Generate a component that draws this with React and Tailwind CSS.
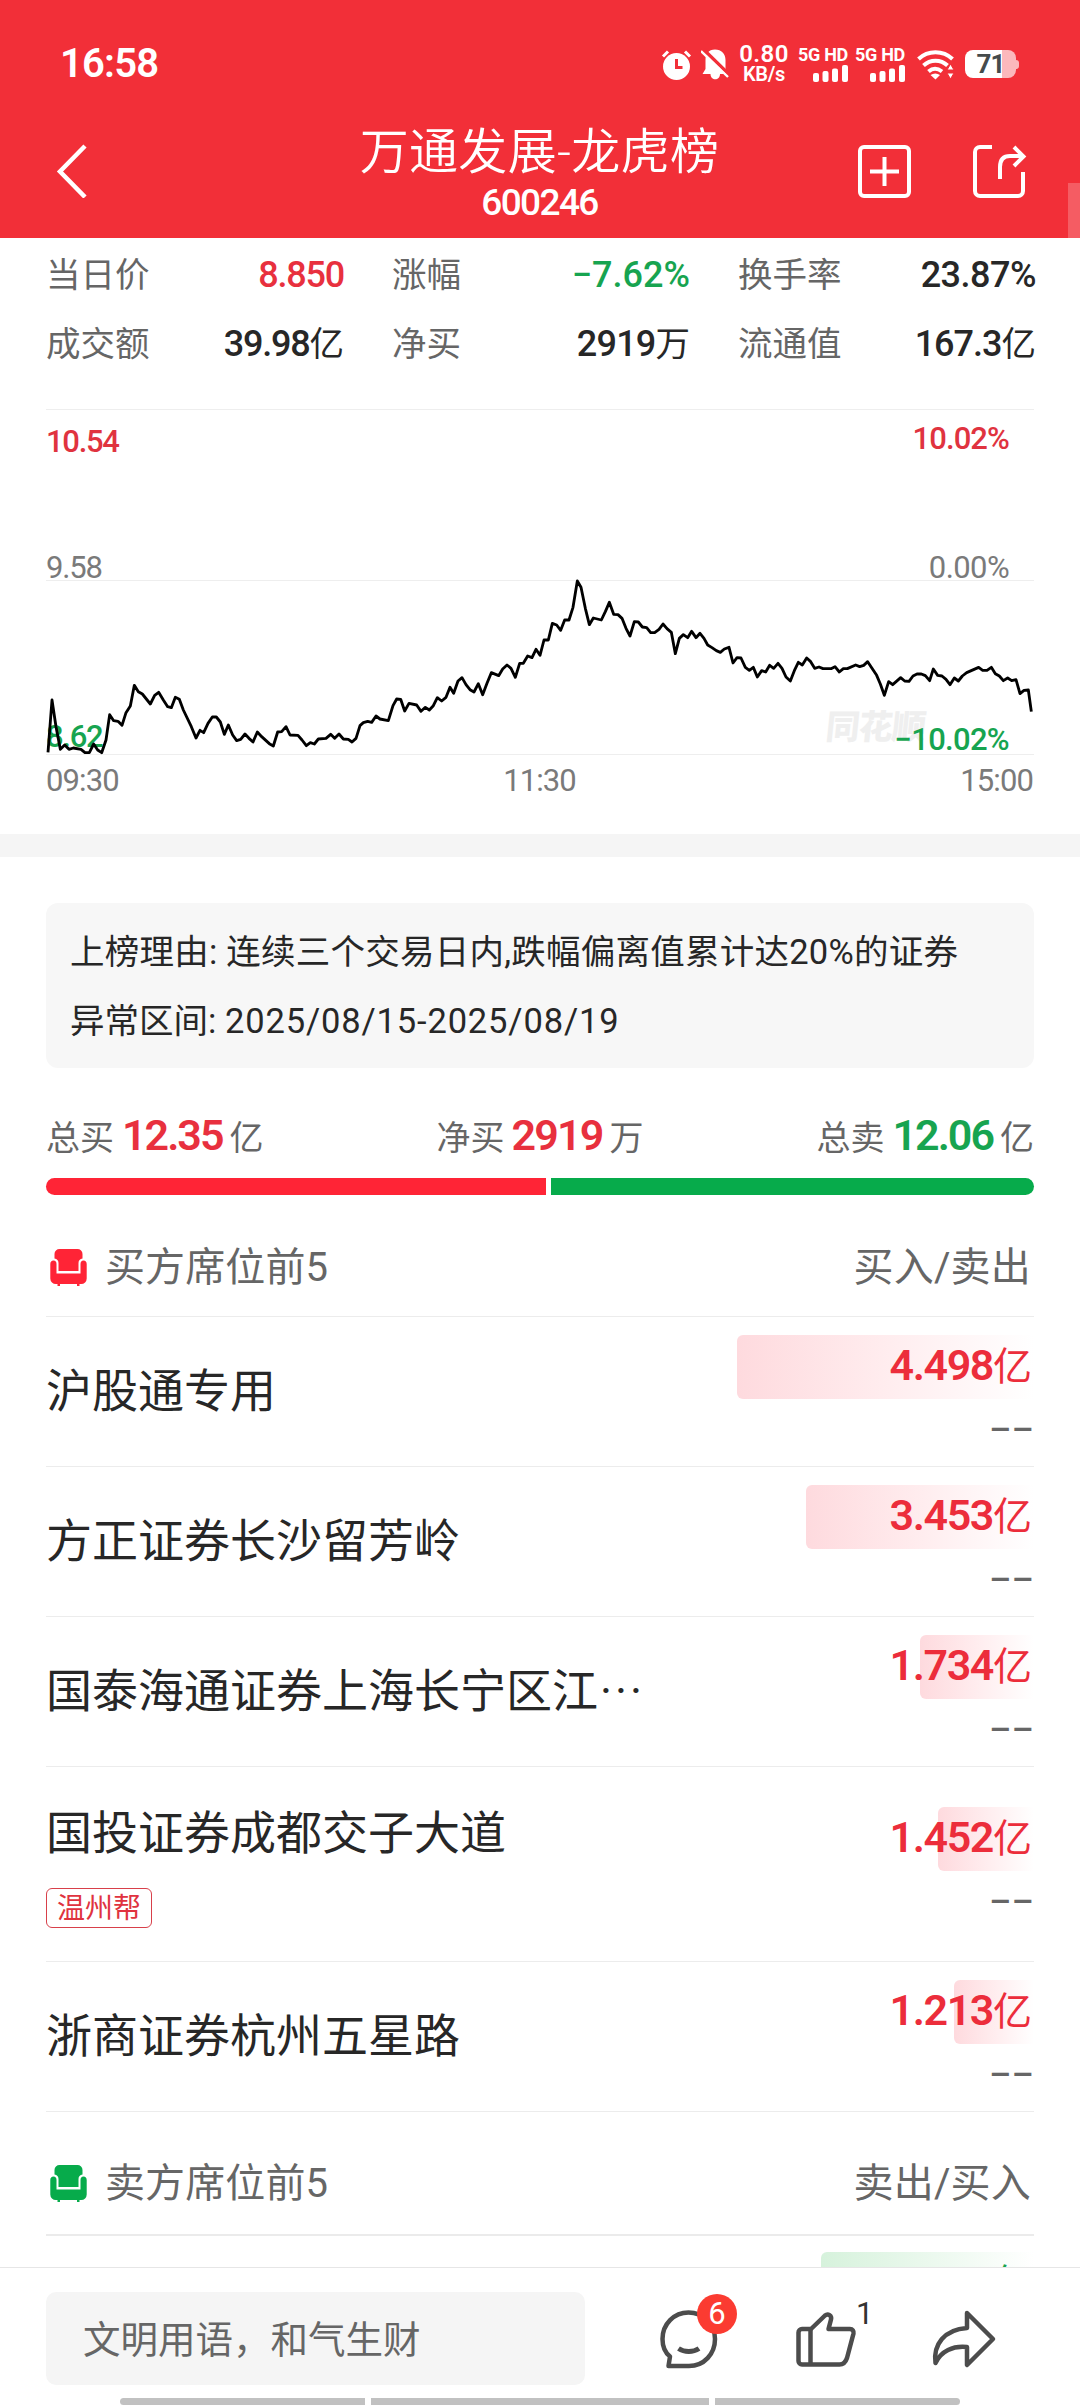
import React from 'react';

const stats = [
  { label: '当日价', value: '8.850', unit: '', style: 'tracking-[-1.200px] text-[#e8303e]' },
  { label: '涨幅', value: '−7.62%', unit: '', style: 'tracking-[0px] text-[#17a450]' },
  { label: '换手率', value: '23.87%', unit: '', style: 'tracking-[-0.500px] text-[#272727]' },
  { label: '成交额', value: '39.98', unit: '亿', style: 'tracking-[-1.200px] text-[#272727]' },
  { label: '净买', value: '2919', unit: '万', style: 'tracking-[-0.800px] text-[#272727]' },
  { label: '流通值', value: '167.3', unit: '亿', style: 'tracking-[-1px] text-[#272727]' },
];

const totals = [
  { label: '总买', value: '12.35', unit: '亿', style: 'tracking-[-2px] text-[#e8303e]' },
  { label: '净买', value: '2919', unit: '万', style: '-ml-px tracking-[-1.800px] text-[#e8303e]' },
  { label: '总卖', value: '12.06', unit: '亿', style: 'tracking-[-2px] text-[#17a450]' },
];

const buyers = [
  { name: '沪股通专用', amount: '4.498', bar: 297 },
  { name: '方正证券长沙留芳岭', amount: '3.453', bar: 228 },
  { name: '国泰海通证券上海长宁区江', truncated: true, amount: '1.734', bar: 114 },
  { name: '国投证券成都交子大道', amount: '1.452', bar: 96, tag: '温州帮' },
  { name: '浙商证券杭州五星路', amount: '1.213', bar: 80 },
];

// Minute line, three units per pixel
const pricePoints =
  '54,577 66,420 78,500 91,568 104,555 117,568 130,564 153,568 165,578 178,578 191,552 203,570 215,578 228,540 239,464 251,482 264,484 276,496 288,458 301,438 313,376 325,395 337,402 361,432 374,406 386,397 400,420 413,440 424,443 436,412 448,418 460,450 484,500 498,534 510,511 521,518 534,490 547,471 559,471 571,486 583,523 595,495 608,525 620,542 632,538 645,522 657,535 669,546 682,516 695,530 718,551 730,558 743,516 755,515 768,500 780,525 804,526 816,540 829,557 841,548 853,552 865,537 888,535 902,523 914,535 927,522 940,537 955,538 966,546 978,535 990,497 1000,488 1013,484 1025,487 1038,468 1050,477 1075,482 1089,437 1100,417 1112,418 1124,453 1137,430 1160,435 1173,454 1186,442 1198,450 1210,437 1222,413 1235,423 1248,412 1260,382 1271,400 1284,363 1296,353 1308,374 1320,389 1332,396 1345,371 1358,404 1371,370 1384,338 1406,347 1418,327 1431,315 1443,325 1456,352 1469,310 1480,310 1493,288 1506,293 1518,268 1530,286 1542,240 1555,240 1567,190 1580,195 1592,211 1604,180 1617,180 1629,142 1642,63 1653,82 1666,145 1678,194 1690,174 1714,180 1726,155 1738,127 1751,163 1764,164 1776,175 1788,205 1800,228 1813,185 1825,186 1837,201 1850,203 1862,218 1874,218 1887,208 1899,192 1911,206 1924,217 1936,281 1948,235 1960,224 1973,233 1985,214 1998,233 2010,220 2022,235 2033,255 2046,263 2059,272 2071,277 2083,267 2097,262 2109,309 2121,293 2133,294 2146,322 2158,331 2170,322 2182,351 2195,332 2207,336 2219,316 2231,325 2244,310 2256,325 2268,351 2281,363 2293,332 2305,307 2317,315 2330,294 2342,305 2354,325 2367,321 2379,326 2403,326 2415,320 2428,336 2440,326 2452,326 2477,315 2489,320 2501,316 2513,305 2526,325 2540,346 2551,372 2563,406 2576,365 2588,374 2612,353 2624,363 2637,364 2649,348 2661,342 2674,342 2686,347 2699,362 2710,327 2723,346 2736,348 2748,358 2760,374 2773,354 2785,363 2797,348 2810,338 2846,322 2858,331 2871,331 2884,322 2896,341 2908,348 2920,362 2933,354 2945,362 2958,359 2970,401 2982,391 2995,390 3004,455';

const Signal = () => (
  <div className="flex w-12 flex-col items-end gap-[3px]">
    <span className="text-[18px] leading-[15px] font-bold tracking-[-0.3px] whitespace-nowrap">5G HD</span>
    <svg width="35" height="17" viewBox="0 0 35 17" fill="currentColor">
      <rect x="0" y="8" width="6" height="9" rx="2" />
      <rect x="9.5" y="6" width="6" height="11" rx="2" />
      <rect x="19" y="3.5" width="6" height="13.5" rx="2" />
      <rect x="29" y="0" width="6" height="17" rx="2" />
    </svg>
  </div>
);

const StatusBar = () => (
  <div className="flex h-32 items-center pr-[61px] pl-[60px]">
    <span className="flex-1 text-[40px] leading-10 font-semibold tracking-[-0.8px]">16:58</span>

    <svg className="mr-[9px]" width="31" height="31" viewBox="0 0 31 31">
      <circle cx="15.5" cy="17.5" r="13.5" fill="#fff" />
      <path d="M2 7.5l5-5M29 7.5l-5-5" stroke="#fff" strokeWidth="3" />
      <path d="M15.5 10v8.5h6" stroke="#f22f38" strokeWidth="3" fill="none" />
    </svg>
    <svg className="mr-[10px]" width="28" height="32" viewBox="0 0 28 32">
      <path d="M14 1.5c6.500 0 10.500 4.500 10.500 10.500v9l2 5H1.500l3-5v-9C4.500 6 7.500 1.500 14 1.500z" fill="#fff" />
      <path d="M9.500 26h9.500c0 7-9.500 7-9.500 0z" fill="#fff" />
      <path d="M1 0l28 27.500" stroke="#f22f38" strokeWidth="3.500" />
      <path d="M0 3l27 26" stroke="#fff" strokeWidth="2.400" />
    </svg>

    <div className="mr-[11px] flex w-[50px] flex-col items-center">
      <span className="text-[24px] leading-5 font-semibold tracking-[0.4px]">0.80</span>
      <span className="text-[20px] leading-5 font-semibold tracking-[-0.300px]">KB/s</span>
    </div>
    <div className="mr-3 flex gap-[9px]">
      <Signal />
      <Signal />
    </div>

    <svg className="mr-[11px]" width="37" height="31" viewBox="0 0 37 31" fill="none" stroke="#fff" strokeWidth="4">
      <path d="M1.500 10c9.500-9 24.500-9 34 0" />
      <path d="M6.500 16.500c7-6.500 17-6.500 24 0" />
      <path d="M11.500 22.500c4-3.500 9-3.500 13.500 0" />
      <path d="M13.500 26c3-2 6.500-2 9.500 0l-4.500 4.500z" fill="#fff" stroke="none" />
      <path d="M33.500 15l3.500 6h-7zM33.500 30l3.500-6h-7z" fill="#fff" stroke="#f22f38" strokeWidth="1" />
    </svg>
    <div className="flex items-center">
      <div className="flex h-7 w-[51px] items-center justify-center rounded-lg bg-linear-to-r from-white from-72% to-[#fbb8bc] to-72%">
        <span className="text-[26px] leading-7 font-bold tracking-[-1px] text-[#454b4c]">71</span>
      </div>
      <div className="h-[9px] w-[3px] rounded-r bg-[#fbb8bc]" />
    </div>
  </div>
);

const NavBar = () => (
  <div className="flex h-[110px] items-start justify-between pr-[53px] pl-[56px]">
    <svg className="mt-4 mr-[112px]" width="54" height="54" viewBox="0 0 54 54" fill="none" stroke="#fff" strokeWidth="4.500">
      <path d="M29 2L4 27.500 29 53" />
    </svg>
    <div className="flex flex-col items-center">
      <h1 className="-mt-px text-[49px] leading-[52px] font-[350] tracking-[0.300px] whitespace-nowrap">万通发展-龙虎榜</h1>
      <span className="mt-px text-[37px] leading-[46px] font-medium tracking-[-1.600px]">600246</span>
    </div>
    <div className="mt-4 flex gap-[60px]">
      <svg width="55" height="55" viewBox="0 0 55 55" fill="none" stroke="#fff" strokeWidth="4">
        <rect x="3" y="3" width="49" height="49" rx="4" />
        <path d="M27.500 13v29M13 27.500h29" />
      </svg>
      <svg width="55" height="55" viewBox="0 0 55 55" fill="none" stroke="#fff" strokeWidth="4">
        <path d="M20 3H8a5 5 0 0 0-5 5v39a5 5 0 0 0 5 5h38a5 5 0 0 0 5-5V28" />
        <path d="M28 35V23c0-7 3-11 10-11h13" />
        <path d="M42 3l9.500 9.500-9.500 9.500" />
      </svg>
    </div>
  </div>
);

const Chart = () => (
  <div className="relative h-[346px] text-[31px] leading-[32px] font-medium tracking-[-0.8px]">
    <div className="absolute right-[109px] bottom-2.5 -skew-x-6 text-[34px] leading-[36px] font-black tracking-[-1px] text-[#efefef]">同花顺</div>
    <span className="absolute top-[17px] left-0 tracking-[-1.300px] text-[#e0333f]">10.54</span>
    <span className="absolute top-[14px] right-[25px] tracking-[-0.900px] text-[#e0333f]">10.02%</span>
    <span className="absolute top-[143px] left-0 font-normal tracking-[-1.200px] text-[#7a7a7a]">9.58</span>
    <span className="absolute top-[143px] right-[25px] font-normal tracking-[-0.600px] text-[#7a7a7a]">0.00%</span>
    <span className="absolute bottom-0.5 left-0 tracking-[-1.300px] text-[#17a450]">8.62</span>
    <span className="absolute right-[25px] -bottom-px tracking-[-0.700px] text-[#17a450]">−10.02%</span>
    <svg className="absolute inset-0" width="988" height="346" viewBox="48 -453 2964 1038" fill="none">
      <path d="M48-451.500h2964M48 61.500h2964M48 583.500h2964" stroke="#eeeeee" strokeWidth="3" />
      <polyline points={pricePoints} stroke="#000" strokeWidth="8.500" strokeLinejoin="round" />
    </svg>
  </div>
);

const Sofa = ({ className }) => (
  <svg className={className} width="37" height="38" viewBox="0 0 37 38" fill="currentColor">
    <path d="M9.500 1h18a5 5 0 0 1 5 5v4.500c-2.500.5-4 2-4 4.500v8h-20v-8c0-2.500-1.500-4-4-4.500V6a5 5 0 0 1 5-5z" />
    <path d="M3.500 12.500C5.500 12.500 6.500 14 6.500 16v9.500h24V16c0-2 1-3.500 3-3.500s3.200 1.500 3.200 3.500v14.500a5.500 5.500 0 0 1-5.500 5.500h-1.700v2h-2.500v-2h-17v2H7.500v-2H6A5.500 5.500 0 0 1 .3 30.500V16c0-2 1.200-3.500 3.200-3.500z" />
  </svg>
);

const SeatHeader = ({ title, columns, color }) => (
  <div className="flex h-full items-center text-[40px] leading-10 text-[#666]">
    <Sofa className={`-mt-0.5 mr-[18px] ml-[4px] ${color}`} />
    <span className="flex-1 tracking-[0.1px]">{title}</span>
    <span className="pr-[3px] tracking-[0.2px]">{columns}</span>
  </div>
);

const Amount = ({ value, width, side }) => {
  const isBuy = side === 'buy';
  return (
    <div className="flex w-[297px] flex-col items-end">
      <div className="relative flex h-16 w-full items-center justify-end pr-0.5">
        <div
          className={`absolute top-0 right-0 h-16 rounded-l-md bg-linear-to-r ${isBuy ? 'from-[#fedade] to-white' : 'from-[#d6f2dc] to-white'}`}
          style={{ width }}
        />
        <span className={`relative -mt-0.5 text-[43px] leading-[62px] font-semibold tracking-[-1.400px] ${isBuy ? 'text-[#ec2d3b]' : 'text-[#17a450]'}`}>
          {value}
          <span className="text-[39px] font-normal tracking-normal">亿</span>
        </span>
      </div>
      <div className="flex h-[50px] items-center pt-[10px]">
        <span className="text-[34px] leading-[38px] font-medium tracking-[0.500px] text-[#666]">––</span>
      </div>
    </div>
  );
};

const SeatRow = ({ name, truncated, tag, amount, bar }) => (
  <div className={`flex items-center justify-between border-b border-[#ececec] ${tag ? 'h-[195px]' : 'h-[150px]'}`}>
    <div className="flex flex-col items-start">
      <span className={`text-[46px] leading-[60px] whitespace-nowrap text-[#272727] ${tag ? 'mt-0.5' : '-mt-0.5'}`}>
        {name}
        {truncated && <span className="ml-[2px] tracking-[3px]">···</span>}
      </span>
      {tag && (
        <span className="mt-[25px] h-10 rounded-md border-[1.500px] border-[#d8404a] px-2.5 text-[28px] leading-[39px] text-[#e0333f]">
          {tag}
        </span>
      )}
    </div>
    <Amount value={amount} width={bar} side="buy" />
  </div>
);

const BottomBar = () => (
  <div className="h-[141px] shrink-0 border-t border-[#e6e6e6] bg-white">
    <div className="flex h-[130px] items-start pt-6 pl-[46px]">
      <div className="flex h-[93px] w-[539px] items-center rounded-[10px] bg-[#f5f5f5] pt-0.5 pl-[37px]">
        <span className="text-[37.500px] leading-[44px] text-[#666]">文明用语，和气生财</span>
      </div>
      <div className="relative mt-[17px] ml-[74px]">
        <svg width="60" height="60" viewBox="0 0 60 60" fill="none" stroke="#4c4c4c" strokeWidth="4.500" strokeLinejoin="round">
          <path d="M9.500 57l1.500-9.500C6 43.500 3.500 36.500 3.500 30 3.500 15 15 3.500 29.500 3.500S56 15 56 30 45 57 30 57z" />
          <path d="M19.500 39.500c6 4 14.500 4 20.500 0" strokeWidth="5" />
        </svg>
        <span className="absolute -top-[15px] left-[38px] flex h-10 w-10 items-center justify-center rounded-full bg-[#fb3b31] text-[31px] leading-10 text-white">6</span>
      </div>
      <div className="relative mt-[17px] ml-[76px]">
        <svg width="62" height="60" viewBox="0 0 62 60" fill="none" stroke="#4c4c4c" strokeWidth="4.500" strokeLinejoin="round">
          <path d="M16 20l14-13.500c3-2.500 7 0 6 4L33.500 20H55c2.500 0 4 2 3.500 4.500L52 49c-1.500 4.500-3.500 6.500-7.500 6.500H7A3.500 3.500 0 0 1 3.500 52V23.500A3.500 3.500 0 0 1 7 20z" />
          <path d="M15.500 20v35.500" />
        </svg>
        <span className="absolute -top-[11px] left-[61px] text-[31px] leading-8 text-[#333]">1</span>
      </div>
      <svg className="mt-[17px] ml-[74px]" width="66" height="60" viewBox="0 0 66 60" fill="none" stroke="#4c4c4c" strokeWidth="4.500" strokeLinejoin="round">
        <path d="M36 4l26 26-26 26V38C22 36.500 10 42 4.500 54 2 36 13 20.500 36 19z" />
      </svg>
    </div>
    <div className="flex h-[7px] justify-center gap-1.5">
      <div className="w-[245px] rounded-l-full bg-[#c1c1c1]" />
      <div className="w-[338px] bg-[#c1c1c1]" />
      <div className="w-[245px] rounded-r-full bg-[#c1c1c1]" />
    </div>
  </div>
);

const App = () => {
  return (
    <div className="flex h-[2408px] w-[1080px] flex-col overflow-hidden bg-white font-['Roboto','Noto_Sans_CJK_SC',sans-serif] text-[#272727]">
      <header className="relative h-[238px] shrink-0 bg-[#f22f38] text-white">
        <StatusBar />
        <NavBar />
        <div className="absolute right-0 bottom-0 h-[55px] w-3 bg-[#f55c63]" />
      </header>

      <main className="min-h-0 flex-1 overflow-hidden">
        <section className="h-[596px] px-[46px]">
          <div className="-mr-[2px] grid h-[171px] grid-cols-3 content-start gap-x-12 pt-0.5">
            {stats.map((item) => (
              <div key={item.label} className="flex h-[69px] items-center justify-between">
                <span className="text-[34.500px] leading-[40px] text-[#666]">{item.label}</span>
                <span className={`text-[36px] leading-[40px] font-medium ${item.style}`}>
                  {item.value}
                  <span className="text-[34.500px] font-normal tracking-normal">{item.unit}</span>
                </span>
              </div>
            ))}
          </div>
          <Chart />
          <div className="flex items-center justify-between pt-[10px] pr-px text-[31px] leading-[32px] tracking-[-0.900px] text-[#7a7a7a]">
            <span>09:30</span>
            <span>11:30</span>
            <span>15:00</span>
          </div>
        </section>

        <div className="h-[23px] bg-[#f5f5f5]" />

        <section className="px-[46px] pt-[46px]">
          <div className="h-[165px] rounded-xl bg-[#f7f7f7] px-6 pt-[15px] text-[34.500px] leading-[69px] whitespace-nowrap">
            <p className="tracking-[0.240px]">上榜理由: 连续三个交易日内,跌幅偏离值累计达20%的证券</p>
            <p>异常区间: <span className="tracking-[0.850px]">2025/08/15-2025/08/19</span></p>
          </div>

          <div className="flex h-[110px] items-center justify-between pt-[26px]">
            {totals.map((item) => (
              <div key={item.label} className="flex items-baseline gap-2 text-[34px] leading-[46px] text-[#666]">
                <span>{item.label}</span>
                <span className={`text-[43px] font-semibold ${item.style}`}>{item.value}</span>
                <span className="-ml-px">{item.unit}</span>
              </div>
            ))}
          </div>
          <div className="flex h-[17px] gap-[5px]">
            <div className="w-[500px] rounded-l-full bg-[#ff2436]" />
            <div className="flex-1 rounded-r-full bg-[#07ab4b]" />
          </div>

          <div className="mt-6 h-[98px] border-b border-[#ececec]">
            <SeatHeader title="买方席位前5" columns="买入/卖出" color="text-[#ff2436]" />
          </div>
          {buyers.map((seat) => (
            <SeatRow key={seat.name} {...seat} />
          ))}

          <div className="mt-[21px] h-[103px] border-b-2 border-[#ebebeb]">
            <SeatHeader title="卖方席位前5" columns="卖出/买入" color="text-[#07ab4b]" />
          </div>
          <div className="flex justify-end pt-4">
            <Amount value="3.225" width={213} side="sell" />
          </div>
        </section>
      </main>

      <BottomBar />
    </div>
  );
};

export default App;
